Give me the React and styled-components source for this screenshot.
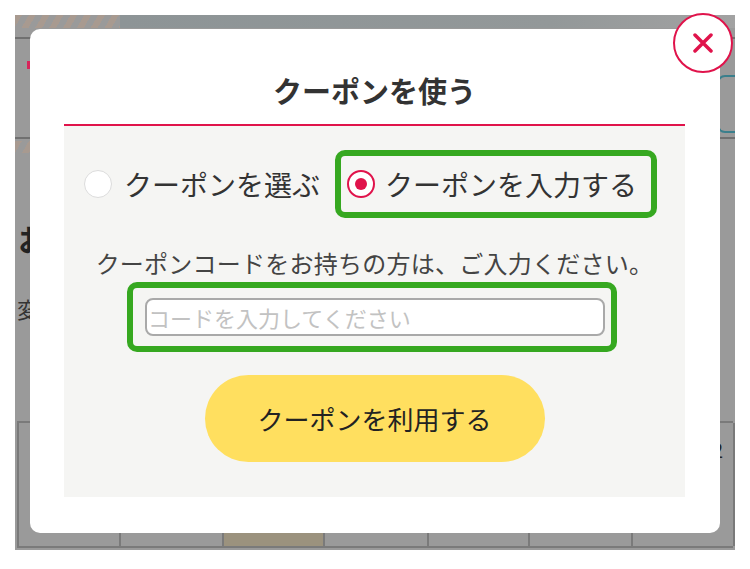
import React from 'react';
import styled, { createGlobalStyle } from 'styled-components';

const GlobalStyle = createGlobalStyle`
  html, body { margin: 0; padding: 0; background: #ffffff; }
  body { font-family: "Noto Sans CJK JP", "Noto Sans", sans-serif; }
  * { box-sizing: border-box; }
`;

const Stage = styled.div`
  width: 750px;
  height: 569px;
  padding: 15px;
`;

const Page = styled.div`
  position: relative;
  width: 720px;
  height: 535px;
  background: #9a9a9a;
  display: flex;
  flex-direction: column;
`;

const TopBand = styled.div`
  height: 13px;
  display: flex;
`;

const Stripes = styled.div`
  width: ${(p) => p.$w}px;
  height: ${(p) => p.$h || 13}px;
  background: repeating-linear-gradient(
    120deg,
    #a89a90 0 6px,
    #9a9a9a 6px 12px
  );
`;

const BandRest = styled.div`
  flex: 1;
  background: linear-gradient(90deg, #8d9496, #939899 70%, #a2a2a2);
`;

const Banner = styled.div`
  margin-top: 9px;
  height: 102px;
  border-top: 2px solid #707070;
  border-bottom: 2px solid #707070;
  display: flex;
  flex-direction: column;
  justify-content: space-between;
  padding: 22px 0 10px 12px;
`;

const BannerRow = styled.div`
  display: flex;
  justify-content: space-between;
  align-items: flex-start;
`;

const Mark = styled.div`
  width: 200px;
  height: ${(p) => p.$h}px;
  border-left: 3px solid ${(p) => p.$c};
`;

const TealBox = styled.div`
  width: 18px;
  height: 58px;
  margin-top: 14px;
  border: 2px solid #3a7f8c;
  border-right: none;
  border-radius: 8px 0 0 8px;
`;

const StripeRow = styled.div`
  margin-top: 2px;
`;

const Heading = styled.div`
  margin-top: 68px;
  padding-left: 3px;
  font-size: 30px;
  font-weight: 700;
  line-height: 34px;
  color: #222;
`;

const Note = styled.div`
  margin-top: 40px;
  padding-left: 2px;
  font-size: 22px;
  line-height: 26px;
  color: #333;
`;

const Table = styled.div`
  margin-top: auto;
  margin-bottom: 2px;
  margin-left: 2px;
  width: 716px;
  height: 127px;
  display: grid;
  grid-template-columns: 102px 103px 101px 104px 101px 103px 102px;
  border-top: 2px solid #7a7a7a;
  border-left: 2px solid #7a7a7a;
  border-bottom: 2px solid #7a7a7a;
`;

const Cell = styled.div`
  border-right: 2px solid #7a7a7a;
  background: ${(p) => (p.$hl ? '#9b927e' : 'transparent')};
  display: flex;
  justify-content: flex-end;
  padding: 12px 10px 0 0;
  font-size: 20px;
  color: #222;
`;

const Modal = styled.div`
  position: absolute;
  left: 15px;
  top: 14px;
  width: 690px;
  height: 504px;
  background: #ffffff;
  border-radius: 10px;
  display: flex;
  flex-direction: column;
  padding: 0 35px 36px 34px;
`;

const CloseButton = styled.button`
  position: absolute;
  left: 643px;
  top: -16px;
  width: 60px;
  height: 60px;
  border-radius: 50%;
  border: 2px solid #e0134b;
  background: #ffffff;
  display: flex;
  align-items: center;
  justify-content: center;
  padding: 0;
  cursor: pointer;
`;

const Header = styled.div`
  height: 97px;
  border-bottom: 2px solid #e0134b;
  display: flex;
  align-items: flex-end;
  justify-content: center;
  padding-bottom: 14px;
`;

const Title = styled.h2`
  margin: 0;
  font-size: 29px;
  line-height: 40px;
  font-weight: 700;
  color: #333;
`;

const Panel = styled.div`
  flex: 1;
  background: #f5f5f3;
  display: flex;
  flex-direction: column;
  align-items: center;
  padding-top: 24px;
`;

const RadioRow = styled.div`
  align-self: stretch;
  display: flex;
  align-items: center;
  gap: 15px;
  padding-left: 20px;
`;

const Highlight = styled.div`
  border: 6px solid #36a820;
  border-radius: 10px;
  display: flex;
  align-items: center;
  padding: ${(p) => p.$pad};
  height: ${(p) => p.$h}px;
`;

const Option = styled.label`
  display: flex;
  align-items: center;
  gap: ${(p) => p.$gap}px;
  cursor: pointer;
`;

const Radio = styled.span`
  width: 28px;
  height: 28px;
  border-radius: 50%;
  background: #ffffff;
  border: ${(p) => (p.$on ? '2px solid #e0134b' : '1.5px solid #dcdcdc')};
  display: flex;
  align-items: center;
  justify-content: center;
  flex-shrink: 0;
  &::after {
    content: '';
    display: ${(p) => (p.$on ? 'block' : 'none')};
    width: 12px;
    height: 12px;
    border-radius: 50%;
    background: #e0134b;
  }
`;

const OptionLabel = styled.span`
  font-size: 28px;
  line-height: 36px;
  color: #333;
`;

const Description = styled.p`
  margin: 27px 0 0;
  font-size: 24px;
  letter-spacing: 0.25px;
  line-height: 36px;
  color: #444;
  text-align: center;
`;

const InputWrap = styled(Highlight)`
  margin-top: 1px;
  margin-right: 5px;
`;

const CodeInput = styled.input`
  width: 460px;
  height: 38px;
  border: 2px solid #a9a9a9;
  border-radius: 8px;
  background: #ffffff;
  padding: 0 1px;
  font-family: "Noto Sans CJK JP", "Noto Sans", sans-serif;
  font-size: 22px;
  color: #333;
  outline: none;
  &::placeholder { color: #c2c2c2; }
`;

const SubmitButton = styled.button`
  margin-top: 23px;
  width: 340px;
  height: 87px;
  border: none;
  border-radius: 44px;
  background: #ffdf5f;
  font-family: "Noto Sans CJK JP", "Noto Sans", sans-serif;
  font-size: 26px;
  color: #222;
  cursor: pointer;
`;

export default function App() {
  return (
    <>
      <GlobalStyle />
      <Stage>
        <Page>
          <TopBand>
            <Stripes $w={105} />
            <BandRest />
          </TopBand>
          <Banner>
            <BannerRow>
              <Mark $c="#d8245a" $h={8} />
              <TealBox />
            </BannerRow>
            <Mark $c="#e6d23a" $h={14} />
          </Banner>
          <StripeRow>
            <Stripes $w={40} $h={12} />
          </StripeRow>
          <Heading>お</Heading>
          <Note>変</Note>
          <Table>
            <Cell />
            <Cell />
            <Cell $hl />
            <Cell />
            <Cell />
            <Cell />
            <Cell>2</Cell>
          </Table>

          <Modal>
            <CloseButton aria-label="閉じる">
              <svg width="20" height="20" viewBox="0 0 20 20">
                <path d="M2 2 L18 18 M18 2 L2 18" stroke="#e0134b" strokeWidth="3.5" strokeLinecap="round" />
              </svg>
            </CloseButton>
            <Header>
              <Title>クーポンを使う</Title>
            </Header>
            <Panel>
              <RadioRow>
                <Option $gap={12}>
                  <Radio />
                  <OptionLabel>クーポンを選ぶ</OptionLabel>
                </Option>
                <Highlight $h={68} $pad="0 14px 0 6px">
                  <Option $gap={10}>
                    <Radio $on />
                    <OptionLabel>クーポンを入力する</OptionLabel>
                  </Option>
                </Highlight>
              </RadioRow>
              <Description>クーポンコードをお持ちの方は、ご入力ください。</Description>
              <InputWrap $h={70} $pad="0 6px 0 12px">
                <CodeInput placeholder="コードを入力してください" />
              </InputWrap>
              <SubmitButton>クーポンを利用する</SubmitButton>
            </Panel>
          </Modal>
        </Page>
      </Stage>
    </>
  );
}
